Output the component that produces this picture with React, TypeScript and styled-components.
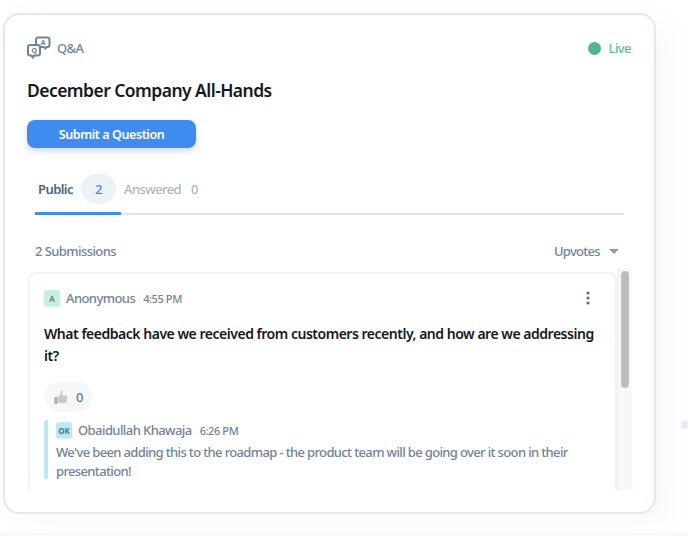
import React from "react"
import styled, { createGlobalStyle } from "styled-components"

const GlobalStyle = createGlobalStyle`
  html, body {
    margin: 0;
    padding: 0;
    background: #fff;
    overflow: hidden;
  }
  body {
    font-family: "Noto Sans", "Open Sans", sans-serif;
    letter-spacing: -0.58px;
  }
  * { box-sizing: border-box; }
`

const Page = styled.div`
  position: relative;
  width: 688px;
  height: 536px;
  padding: 13px 0 0 3px;
  overflow: hidden;
`

const Card = styled.section`
  width: 653px;
  height: 501px;
  background: #fff;
  border: 2px solid #e0e9f2;
  border-radius: 16px;
  box-shadow: 14px 10px 24px rgba(226, 234, 243, 0.3);
  padding: 20px 22px 0 22px;
  display: flex;
  flex-direction: column;
`

const HeaderRow = styled.div`
  display: flex;
  align-items: center;
  justify-content: space-between;
  height: 26px;
`

const Kind = styled.div`
  display: flex;
  align-items: center;
  gap: 6px;
  font-size: 13px;
  font-weight: 500;
  color: #6f8499;
`

const Live = styled.div`
  display: flex;
  align-items: center;
  gap: 8px;
  margin-right: 1px;
  font-size: 13px;
  font-weight: 500;
  color: #5cbd8f;
`

const LiveDot = styled.span`
  width: 13px;
  height: 13px;
  border-radius: 50%;
  background: #52b585;
`

const Title = styled.h1`
  margin: 16px 0 0;
  font-size: 17.5px;
  line-height: 26px;
  font-weight: 600;
  letter-spacing: -0.55px;
  color: #14191f;
`

const SubmitButton = styled.button`
  margin-top: 17px;
  width: 169px;
  height: 28px;
  border: 0;
  border-radius: 8px;
  background: #3f8cf0;
  color: #fff;
  font: inherit;
  font-size: 12.5px;
  font-weight: 600;
  letter-spacing: -0.42px;
  box-shadow: 0 3px 6px rgba(90, 110, 140, 0.28);
`

const Tabs = styled.div`
  margin: 13px 8px 0;
  width: 589px;
  height: 54px;
  border-bottom: 2px solid #e3e6e9;
  display: flex;
`

const Tab = styled.div<{ $active?: boolean }>`
  height: 54px;
  width: ${p => (p.$active ? "86px" : "auto")};
  padding: 13px 0 0 3px;
  display: flex;
  align-items: flex-start;
  font-size: 13px;
  line-height: 31px;
  font-weight: ${p => (p.$active ? 600 : 500)};
  color: ${p => (p.$active ? "#4a6580" : "#b0b4b8")};
  border-bottom: ${p => (p.$active ? "3px solid #3f8cf0" : "0")};
`

const Count = styled.span<{ $active?: boolean }>`
  margin-left: ${p => (p.$active ? "8px" : "10px")};
  width: ${p => (p.$active ? "35px" : "auto")};
  height: 30px;
  border-radius: 15px;
  text-align: center;
  font-weight: 500;
  background: ${p => (p.$active ? "#edf2f7" : "transparent")};
  color: ${p => (p.$active ? "#3f8cf0" : "#b0b4b8")};
`

const ListHeader = styled.div`
  margin: 26px 13px 0 8px;
  height: 20px;
  display: flex;
  align-items: center;
  justify-content: space-between;
  font-size: 13px;
  font-weight: 500;
  color: #6f8499;
`

const SortBy = styled.div`
  display: flex;
  align-items: center;
  gap: 9px;
  letter-spacing: -0.7px;
`

const SortCaret = styled.span`
  width: 0;
  height: 0;
  border-left: 5px solid transparent;
  border-right: 5px solid transparent;
  border-top: 5px solid #8a9bac;
`

const ListArea = styled.div`
  margin: 7px 0 0 1px;
  width: 604px;
  height: 222px;
  display: flex;
  overflow: hidden;
`

const QuestionCard = styled.article`
  flex: 1;
  height: 260px;
  margin-top: 4px;
  border: 2px solid #eff2f6;
  border-radius: 8px;
  padding: 14px 8px 0 14px;
`

const Scrollbar = styled.div`
  width: 15px;
  padding: 3px 3px 0 4px;
  background: linear-gradient(90deg, #eff2f6 0 2px, #f7f8f9 2px);
`

const ScrollThumb = styled.div`
  height: 117px;
  border-radius: 4px;
  background: #bdbdbd;
`

const AuthorRow = styled.div`
  display: flex;
  align-items: center;
  height: 20px;
`

const Avatar = styled.span<{ $bg: string; $fg: string }>`
  width: 16px;
  height: 16px;
  border-radius: 3px;
  display: flex;
  align-items: center;
  justify-content: center;
  font-size: 8px;
  font-weight: 700;
  letter-spacing: 0;
  background: ${p => p.$bg};
  color: ${p => p.$fg};
  box-shadow: 0 1px 2px rgba(120, 150, 170, 0.3);
`

const AuthorName = styled.span`
  margin-left: 6px;
  font-size: 13px;
  font-weight: 500;
  color: #6f8499;
`

const Time = styled.span`
  margin-left: 8px;
  font-size: 11px;
  font-weight: 500;
  letter-spacing: -0.4px;
  color: #6f8499;
`

const MoreButton = styled.span`
  margin-left: auto;
  margin-right: 17px;
  color: #5a7188;
  display: flex;
`

const Question = styled.p`
  margin: 15px 0 0;
  font-size: 14px;
  line-height: 22px;
  font-weight: 600;
  letter-spacing: -0.48px;
  color: #14191f;
`

const Reaction = styled.div`
  margin-top: 15px;
  width: 48px;
  height: 30px;
  border-radius: 15px;
  background: #f6f7f9;
  padding-left: 10px;
  display: flex;
  align-items: center;
  gap: 8px;
  font-size: 13px;
  font-weight: 500;
  color: #5f7a94;
`

const Reply = styled.div`
  margin-top: 8px;
  border-left: 4px solid #bfe8f5;
  border-radius: 2px;
  padding: 0 0 0 8px;
  height: 59px;
`

const ReplyText = styled.p`
  margin: 3px 0 0;
  font-size: 13px;
  line-height: 19px;
  font-weight: 500;
  letter-spacing: -0.64px;
  color: #6f8499;
`

const StrayDot = styled.span`
  position: absolute;
  left: 681px;
  top: 421px;
  width: 8px;
  height: 8px;
  border-radius: 50%;
  background: #e3ebf3;
`

const BottomStrip = styled.div`
  position: absolute;
  left: 0;
  right: 0;
  bottom: 0;
  height: 3px;
  background: #f6f9fb;
`

function QaIcon() {
  return (
    <svg width="24" height="24" viewBox="0 0 24 24" fill="none" stroke="#6f8499" strokeWidth="2" strokeLinejoin="round">
      <path d="M11 1.500h9.500a2 2 0 0 1 2 2v5.500a2 2 0 0 1-2 2h-1l-1.200 1.700-1.200-1.700H13" />
      <path d="M11 1.500a2 2 0 0 0-2 2v5" />
      <path d="M3 9h8a2 2 0 0 1 2 2v6.500a2 2 0 0 1-2 2H7l-1.200 2.200-1.200-2.200H3a2 2 0 0 1-2-2V11a2 2 0 0 1 2-2z" fill="#fff" />
      <text x="16" y="8.500" fontSize="7" fontWeight="700" fontFamily="Noto Sans" fill="#6f8499" stroke="none" textAnchor="middle">A</text>
      <text x="7" y="17" fontSize="7" fontWeight="700" fontFamily="Noto Sans" fill="#6f8499" stroke="none" textAnchor="middle">Q</text>
    </svg>
  )
}

function ThumbIcon() {
  return (
    <svg width="14" height="15" viewBox="0 0 14 15">
      <rect x="0.5" y="7" width="3" height="7" rx="0.6" fill="#a9a9a9" />
      <path d="M4 7.200 6.600 3.600V1.200c0-.7 1.800-.7 2 .7.1 1-.2 2.500-.6 3.600h4.200c1.300 0 1.400 1.600.6 2 .7.400.6 1.600-.1 1.900.5.500.3 1.500-.4 1.800.3.700-.2 1.700-1.200 1.700H6.400c-1 0-1.600-.5-2.400-.6z" fill="#c9c9c9" />
    </svg>
  )
}

function DotsIcon() {
  return (
    <svg width="4" height="14" viewBox="0 0 4 14" fill="currentColor">
      <circle cx="2" cy="2" r="1.6" />
      <circle cx="2" cy="7" r="1.6" />
      <circle cx="2" cy="12" r="1.6" />
    </svg>
  )
}

export default function App() {
  return (
    <Page>
      <GlobalStyle />
      <Card>
        <HeaderRow>
          <Kind>
            <QaIcon />
            Q&amp;A
          </Kind>
          <Live>
            <LiveDot />
            Live
          </Live>
        </HeaderRow>
        <Title>December Company All-Hands</Title>
        <div>
          <SubmitButton>Submit a Question</SubmitButton>
        </div>
        <Tabs>
          <Tab $active>
            Public
            <Count $active>2</Count>
          </Tab>
          <Tab>
            Answered
            <Count>0</Count>
          </Tab>
        </Tabs>
        <ListHeader>
          <span>2 Submissions</span>
          <SortBy>
            Upvotes
            <SortCaret />
          </SortBy>
        </ListHeader>
        <ListArea>
          <QuestionCard>
            <AuthorRow>
              <Avatar $bg="#c5f0dd" $fg="#5f8a78">A</Avatar>
              <AuthorName>Anonymous</AuthorName>
              <Time>4:55 PM</Time>
              <MoreButton>
                <DotsIcon />
              </MoreButton>
            </AuthorRow>
            <Question>What feedback have we received from customers recently, and how are we addressing it?</Question>
            <Reaction>
              <ThumbIcon />
              0
            </Reaction>
            <Reply>
              <AuthorRow>
                <Avatar $bg="#bfe8f5" $fg="#4c7480">OK</Avatar>
                <AuthorName>Obaidullah Khawaja</AuthorName>
                <Time>6:26 PM</Time>
              </AuthorRow>
              <ReplyText>We've been adding this to the roadmap - the product team will be going over it soon in their presentation!</ReplyText>
            </Reply>
          </QuestionCard>
          <Scrollbar>
            <ScrollThumb />
          </Scrollbar>
        </ListArea>
      </Card>
      <StrayDot />
      <BottomStrip />
    </Page>
  )
}
